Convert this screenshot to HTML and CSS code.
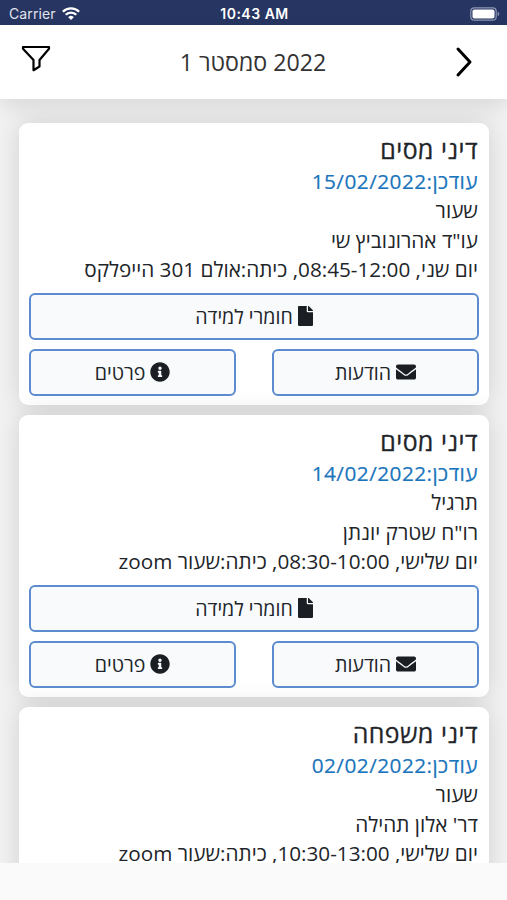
FILE: index.html
```html
<!DOCTYPE html>
<html lang="he" dir="rtl">
<head>
<meta charset="UTF-8">
<meta name="viewport" content="width=device-width, initial-scale=1.0">
<title>2022 סמסטר 1</title>
<link rel="stylesheet" href="styles.css">
</head>
<body>

<!-- shared icons -->
<svg width="0" height="0" style="display:none">
    <symbol id="icon-file" viewBox="0 0 384 512">
        <path d="M224 136V0H24C10.700 0 0 10.700 0 24v464c0 13.300 10.700 24 24 24h336c13.300 0 24-10.700 24-24V160H248c-13.200 0-24-10.800-24-24zm160-14.100v6.100H256V0h6.100c6.400 0 12.500 2.500 17 7l97.900 98c4.500 4.500 7 10.600 7 16.900z"/>
    </symbol>
    <symbol id="icon-mail" viewBox="0 0 512 512">
        <path d="M502.300 190.800c3.900-3.100 9.700-.2 9.700 4.700V400c0 26.500-21.500 48-48 48H48c-26.500 0-48-21.500-48-48V195.600c0-5 5.700-7.800 9.700-4.700 22.400 17.400 52.100 39.500 154.100 113.600 21.100 15.400 56.700 47.800 92.200 47.600 35.700.3 72-32.800 92.300-47.600 102-74.100 131.600-96.300 154-113.700zM256 320c23.200.4 56.600-29.200 73.400-41.400 132.700-96.300 142.800-104.700 173.400-128.700 5.800-4.500 9.200-11.500 9.200-18.900v-19c0-26.500-21.500-48-48-48H48c-26.500 0-48 21.500-48 48v19c0 7.400 3.400 14.300 9.200 18.900 30.600 23.900 40.700 32.400 173.400 128.700 16.800 12.200 50.200 41.800 73.400 41.400z"/>
    </symbol>
    <symbol id="icon-info" viewBox="0 0 512 512">
        <path d="M256 8C119 8 8 119.100 8 256s111 248 248 248 248-111 248-248S393 8 256 8zm0 110c23.200 0 42 18.800 42 42s-18.800 42-42 42-42-18.800-42-42 18.800-42 42-42zm56 254c0 6.600-5.400 12-12 12h-88c-6.600 0-12-5.400-12-12v-24c0-6.600 5.400-12 12-12h12v-64h-12c-6.600 0-12-5.400-12-12v-24c0-6.600 5.400-12 12-12h64c6.600 0 12 5.400 12 12v100h12c6.600 0 12 5.400 12 12v24z"/>
    </symbol>
</svg>

<div class="status-bar" dir="ltr">
    <div class="carrier">
        <span>Carrier</span>
        <svg class="wifi" viewBox="0 0 18 13">
            <g fill="none" stroke="#fff" stroke-width="2.300">
                <path d="M.9 4.800a11.500 11.500 0 0 1 16.200 0"/>
                <path d="M3.700 7.800a7.500 7.500 0 0 1 10.600 0"/>
            </g>
            <path d="M9 13 6.200 10.200a4 4 0 0 1 5.600 0z" fill="#fff"/>
        </svg>
    </div>
    <div class="time">10:43 AM</div>
    <div class="status-end">
        <svg class="battery" viewBox="0 0 30 14">
            <rect x=".8" y=".8" width="25.400" height="12.400" rx="3.500" fill="none" stroke="#8e96b4" stroke-width="1.200"/>
            <rect x="2.500" y="2.500" width="22" height="9" rx="1.800" fill="#fff"/>
            <path d="M27.700 4.800c2 .7 2 3.700 0 4.400z" fill="#8e96b4"/>
        </svg>
    </div>
</div>

<header class="header">
    <svg class="chevron" viewBox="0 0 18 32"><path d="M3 3 15 16 3 29"/></svg>
    <h1>2022 סמסטר 1</h1>
    <svg class="filter" viewBox="0 0 30 28"><path d="M2 2h26v1.800L18.500 15v6.500L12.500 25.200V15L2 3.800z"/></svg>
</header>

<main class="courses">
    <div class="card">
        <h2>דיני מסים</h2>
        <p class="updated">עודכן:15/02/2022</p>
        <p>שעור</p>
        <p>עו"ד אהרונוביץ שי</p>
        <p>יום שני, 08:45-12:00, כיתה:אולם 301 הייפלקס</p>
        <div class="buttons">
            <button class="wide"><svg class="icon file"><use href="#icon-file"/></svg>חומרי למידה</button>
            <button><svg class="icon"><use href="#icon-mail"/></svg>הודעות</button>
            <button><svg class="icon"><use href="#icon-info"/></svg>פרטים</button>
        </div>
    </div>

    <div class="card">
        <h2>דיני מסים</h2>
        <p class="updated">עודכן:14/02/2022</p>
        <p>תרגיל</p>
        <p>רו"ח שטרק יונתן</p>
        <p>יום שלישי, 08:30-10:00, כיתה:שעור zoom</p>
        <div class="buttons">
            <button class="wide"><svg class="icon file"><use href="#icon-file"/></svg>חומרי למידה</button>
            <button><svg class="icon"><use href="#icon-mail"/></svg>הודעות</button>
            <button><svg class="icon"><use href="#icon-info"/></svg>פרטים</button>
        </div>
    </div>

    <div class="card">
        <h2>דיני משפחה</h2>
        <p class="updated">עודכן:02/02/2022</p>
        <p>שעור</p>
        <p>דר' אלון תהילה</p>
        <p>יום שלישי, 10:30-13:00, כיתה:שעור zoom</p>
    </div>
</main>

<footer class="footer"></footer>

</body>
</html>
```
FILE: styles.css
```css
* {
    box-sizing: border-box;
}
body {
    margin: 0;
    height: 900px;
    display: flex;
    flex-direction: column;
    overflow: hidden;
    background-color: #f2f2f2;
    color: #212529;
    font-family: "Open Sans", "Noto Sans", sans-serif;
}
h1, h2, p {
    margin: 0;
    font-weight: 400;
}
.status-bar {
    flex: none;
    display: grid;
    grid-template-columns: 1fr auto 1fr;
    align-items: center;
    height: 25px;
    padding: 2px 7px 0 9px;
    background-color: #273562;
    color: #fff;
    font-family: Inter, sans-serif;
    font-size: 14px;
}
.carrier {
    display: flex;
    align-items: center;
    gap: 6px;
    color: #e1e4ec;
    letter-spacing: 0.1px;
}
.wifi {
    width: 18px;
    height: 13px;
}
.time {
    font-size: 14px;
    font-weight: 600;
    letter-spacing: 0.5px;
}
.status-end {
    display: flex;
    justify-content: flex-end;
}
.battery {
    width: 30px;
    height: 14px;
}
.header {
    flex: none;
    position: relative;
    z-index: 1;
    display: flex;
    align-items: center;
    justify-content: space-between;
    height: 74px;
    padding: 0 34px 0 21px;
    background-color: #fff;
    box-shadow: 0 8px 20px rgba(0,0,0,0.1);
}
.header h1 {
    padding-bottom: 1px;
    font-size: 23.2px;
    color: #333;
}
.chevron, .filter {
    fill: none;
    stroke: #000;
    stroke-linecap: round;
    stroke-linejoin: round;
}
.chevron {
    width: 18px;
    height: 32px;
    margin-bottom: 1px;
    stroke-width: 3;
}
.filter {
    width: 30px;
    height: 28px;
    margin-bottom: 7px;
    stroke-width: 2.2;
}
.courses {
    flex: 1;
    min-height: 0;
    overflow: hidden;
    padding: 24px 18px 0 19px;
}
.card {
    height: 282px;
    margin-bottom: 10px;
    padding: 10px 11px 10px 10px;
    background-color: #fff;
    border-radius: 9px;
    box-shadow: 0 0 26px rgba(0,0,0,0.14);
}
.card h2 {
    padding-bottom: 1px;
    font-size: 24.8px;
    line-height: 33px;
    letter-spacing: 0.5px;
    -webkit-text-stroke: 0.3px;
}
.card p {
    font-size: 20.7px;
    line-height: 29.3px;
    white-space: nowrap;
}
.card .updated {
    color: #1b75bc;
    font-size: 20.8px;
    letter-spacing: 0.45px;
    -webkit-text-stroke: 0.2px;
}
.buttons {
    display: grid;
    grid-template-columns: 207px 207px;
    justify-content: space-between;
    row-gap: 9px;
    margin: 9px -1px 0 0;
}
.buttons .wide {
    grid-column: 1 / 3;
}
button {
    display: flex;
    align-items: center;
    justify-content: center;
    gap: 5px;
    height: 47px;
    padding: 0 0 1px;
    border: 2px solid #5d8bd0;
    border-radius: 6px;
    background-color: #f8fafc;
    color: #212529;
    font-family: inherit;
    font-size: 19.6px;
}
.icon {
    width: 20px;
    height: 20px;
    fill: #1b1f23;
}
.icon.file {
    width: 15px;
}
.footer {
    flex: none;
    height: 37px;
    background-color: #fafafa;
}
```
